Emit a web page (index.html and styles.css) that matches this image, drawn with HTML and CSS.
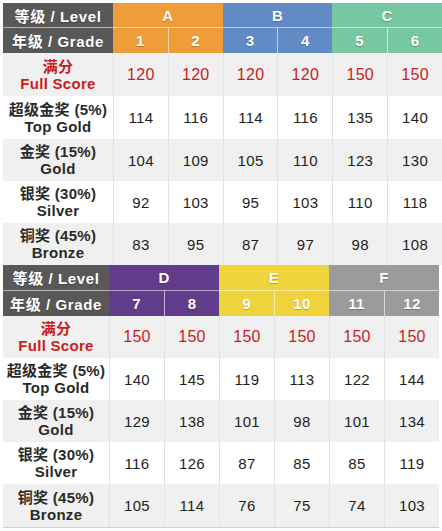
FILE: index.html
```html
<!DOCTYPE html>
<html lang="zh">
<head>
<meta charset="utf-8">
<title>Levels</title>
<link rel="stylesheet" href="styles.css">
</head>
<body>
<div class="page">
  <div class="table t1">
    <div class="hd lbl lvl">等级 / Level</div>
    <div class="hd lvl span2 ga">A</div>
    <div class="hd lvl span2 gb">B</div>
    <div class="hd lvl span2 gc">C</div>
    <div class="hd lbl">年级 / Grade</div>
    <div class="hd ga">1</div><div class="hd ga sep">2</div>
    <div class="hd gb">3</div><div class="hd gb sep">4</div>
    <div class="hd gc">5</div><div class="hd gc sep">6</div>

    <div class="c lab red shade">满分<br>Full Score</div>
    <div class="c num red shade">120</div><div class="c num red shade">120</div><div class="c num red shade">120</div><div class="c num red shade">120</div><div class="c num red shade">150</div><div class="c num red shade">150</div>

    <div class="c lab">超级金奖 (5%)<br>Top Gold</div>
    <div class="c num">114</div><div class="c num">116</div><div class="c num">114</div><div class="c num">116</div><div class="c num">135</div><div class="c num">140</div>

    <div class="c lab shade">金奖 (15%)<br>Gold</div>
    <div class="c num shade">104</div><div class="c num shade">109</div><div class="c num shade">105</div><div class="c num shade">110</div><div class="c num shade">123</div><div class="c num shade">130</div>

    <div class="c lab">银奖 (30%)<br>Silver</div>
    <div class="c num">92</div><div class="c num">103</div><div class="c num">95</div><div class="c num">103</div><div class="c num">110</div><div class="c num">118</div>

    <div class="c lab shade">铜奖 (45%)<br>Bronze</div>
    <div class="c num shade">83</div><div class="c num shade">95</div><div class="c num shade">87</div><div class="c num shade">97</div><div class="c num shade">98</div><div class="c num shade">108</div>
  </div>

  <div class="table t2">
    <div class="hd lbl lvl">等级 / Level</div>
    <div class="hd lvl span2 gd">D</div>
    <div class="hd lvl span2 ge">E</div>
    <div class="hd lvl span2 gf">F</div>
    <div class="hd lbl">年级 / Grade</div>
    <div class="hd gd">7</div><div class="hd gd sep">8</div>
    <div class="hd ge">9</div><div class="hd ge sep">10</div>
    <div class="hd gf">11</div><div class="hd gf sep">12</div>

    <div class="c lab red shade">满分<br>Full Score</div>
    <div class="c num red shade">150</div><div class="c num red shade">150</div><div class="c num red shade">150</div><div class="c num red shade">150</div><div class="c num red shade">150</div><div class="c num red shade">150</div>

    <div class="c lab">超级金奖 (5%)<br>Top Gold</div>
    <div class="c num">140</div><div class="c num">145</div><div class="c num">119</div><div class="c num">113</div><div class="c num">122</div><div class="c num">144</div>

    <div class="c lab shade">金奖 (15%)<br>Gold</div>
    <div class="c num shade">129</div><div class="c num shade">138</div><div class="c num shade">101</div><div class="c num shade">98</div><div class="c num shade">101</div><div class="c num shade">134</div>

    <div class="c lab">银奖 (30%)<br>Silver</div>
    <div class="c num">116</div><div class="c num">126</div><div class="c num">87</div><div class="c num">85</div><div class="c num">85</div><div class="c num">119</div>

    <div class="c lab shade">铜奖 (45%)<br>Bronze</div>
    <div class="c num shade">105</div><div class="c num shade">114</div><div class="c num shade">76</div><div class="c num shade">75</div><div class="c num shade">74</div><div class="c num shade">103</div>
  </div>
</div>
</body>
</html>
```

FILE: styles.css
```css
html, body {
  margin: 0;
  padding: 0;
  background: #ffffff;
}

body {
  font-family: "Liberation Sans", Arial, "Noto Sans CJK SC", sans-serif;
  color: #1e1e1e;
}

.page {
  padding: 3px 0 0 3px;
  display: flex;
  flex-direction: column;
}

.table {
  display: grid;
}

.t1 {
  width: 439px;
  grid-template-columns: 110px repeat(6, 1fr);
  grid-template-rows: 25px 25px 43px 43px 42px 42px 42px;
}

.t2 {
  width: 436px;
  grid-template-columns: 106px repeat(6, 1fr);
  grid-template-rows: 26px 25px 42px 42px 42px 42px 43px;
  border-bottom: 1px solid #cfcfcf;
}

.hd {
  display: flex;
  align-items: center;
  justify-content: center;
  color: #ffffff;
  font-weight: bold;
  font-size: 15px;
  letter-spacing: 0.4px;
  text-shadow: 0 1px 1px rgba(0, 0, 0, 0.25);
}

.hd.lbl {
  background: #585858;
  font-size: 15px;
  letter-spacing: 0.6px;
}

.hd.lvl {
  border-bottom: 1px solid rgba(255, 255, 255, 0.55);
}

.span2 {
  grid-column: span 2;
}

.sep {
  border-left: 1px solid rgba(255, 255, 255, 0.6);
}

.ga { background: #ee9d38; }
.gb { background: #628bc5; }
.gc { background: #77c7a2; }
.gd { background: #613c8b; }
.ge { background: #f0d43c; }
.gf { background: #9b9b9b; }

.c {
  display: flex;
  align-items: center;
  justify-content: center;
  text-align: center;
  background: #ffffff;
}

.c.shade {
  background: #f0f0f0;
}

.lab {
  font-size: 15px;
  font-weight: bold;
  line-height: 17px;
  color: #2a2a2a;
  letter-spacing: 0.3px;
}

.num {
  font-size: 15px;
  border-left: 1px solid #e2e2e2;
  color: #1e1e1e;
  letter-spacing: 0.3px;
}

.red {
  color: #cc1c1c;
}

.num.red {
  font-size: 16px;
}
```
